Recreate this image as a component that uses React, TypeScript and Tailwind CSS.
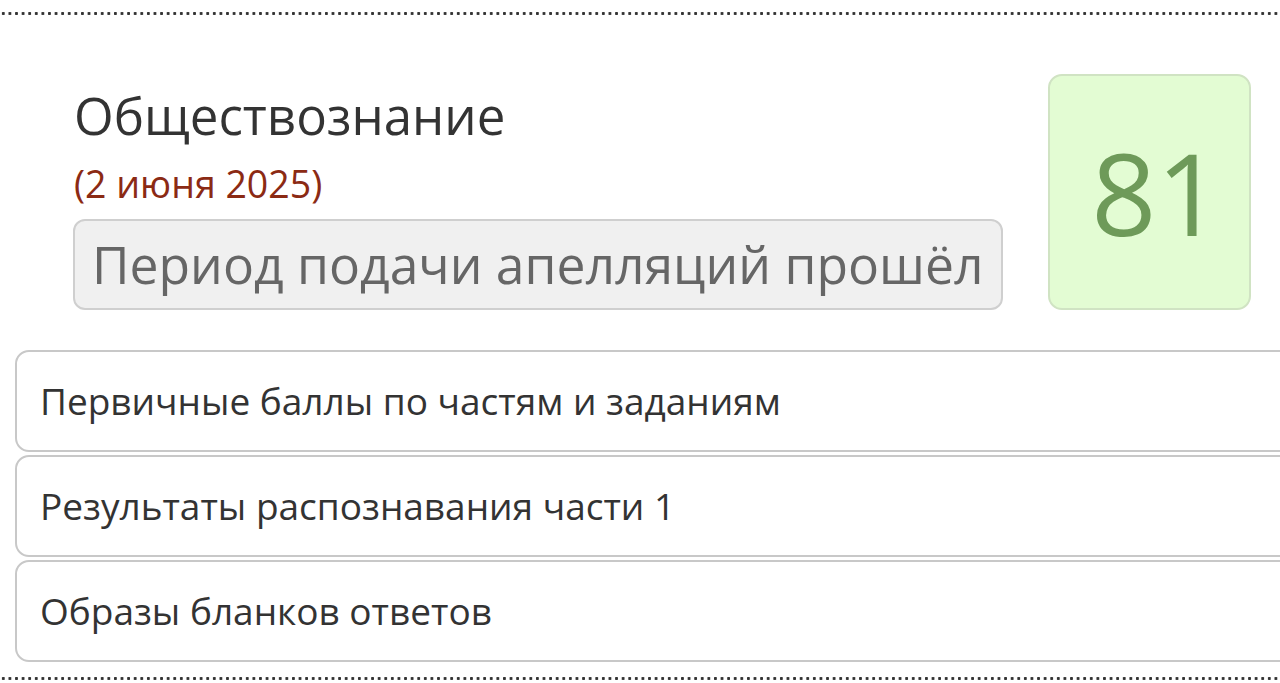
import React from 'react';

const sections = [
  'Первичные баллы по частям и заданиям',
  'Результаты распознавания части 1',
  'Образы бланков ответов',
];

function Dotted() {
  return (
    <div className="h-[3px] w-full bg-[radial-gradient(circle,#333_1.3px,transparent_1.8px)] bg-[length:6.6px_3px] bg-repeat-x" />
  );
}

export default function App() {
  return (
    <div className="w-[1280px] h-[683px] overflow-hidden bg-white font-['Open_Sans',sans-serif] text-[#333]">
      <div className="pt-[12px]">
        <Dotted />
      </div>

      <div className="flex items-start justify-between pl-[73px] pr-[29px] pt-[59px]">
        <div className="mt-[11px] flex flex-col">
          <h1 className="pl-[1px] text-[51px] leading-[60px] text-[#333]">Обществознание</h1>
          <div className="pl-[1px] mt-[18px] text-[37.5px] leading-[42px] text-[#8b2a14]">(2 июня 2025)</div>
          <div className="mt-[14px] w-[930px] h-[91px] rounded-[12px] border-2 border-[#cfcfcf] bg-[#f0f0f0] flex items-center pl-[17px]">
            <span className="text-[51.6px] leading-none text-[#666]">Период подачи апелляций прошёл</span>
          </div>
        </div>
        <div className="w-[203px] h-[236px] rounded-[14px] border-2 border-[#d0e3c3] bg-[#e3fcd3] flex items-center justify-center pl-[14px]">
          <span className="text-[114px] leading-none text-[#6e9a59]">81</span>
        </div>
      </div>

      <div className="mt-[40px] ml-[15px] mr-[-30px] flex flex-col gap-[3px]">
        {sections.map((s) => (
          <div
            key={s}
            className="h-[102px] rounded-[14px] border-2 border-[#c8c8c8] bg-white flex items-center pl-[23px]"
          >
            <span className="text-[37px] text-[#333]">{s}</span>
          </div>
        ))}
      </div>

      <div className="mt-[15px]">
        <Dotted />
      </div>
    </div>
  );
}
